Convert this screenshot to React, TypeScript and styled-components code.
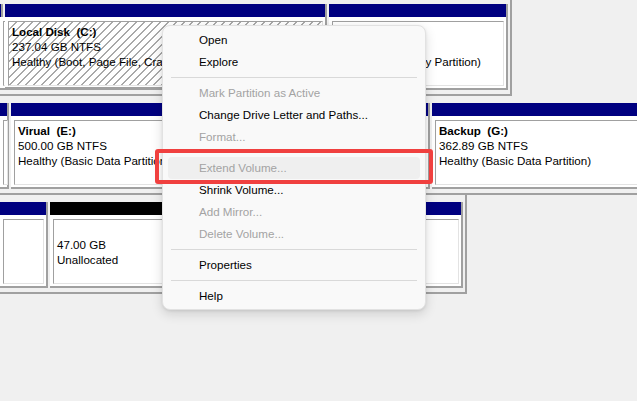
import React from "react";
import styled, { createGlobalStyle } from "styled-components";

const GlobalStyle = createGlobalStyle`
  html, body {
    margin: 0;
    padding: 0;
    background: #f0f0f0;
    overflow: hidden;
  }
  body {
    font-family: "Segoe UI", "Liberation Sans", Arial, sans-serif;
    font-size: 11.6px;
    color: #000;
  }
`;

const Screen = styled.div`
  position: relative;
  width: 637px;
  height: 401px;
  overflow: hidden;
  background: #f0f0f0;
`;

const DiskList = styled.div`
  display: flex;
  flex-direction: column;
  align-items: flex-start;
`;

const DiskRow = styled.div<{ $padTop: number }>`
  display: flex;
  flex: none;
  gap: 2px;
  height: 86px;
  padding: ${(p) => p.$padTop}px 2px 4px 0;
  border-right: 2px solid #a0a0a0;
  border-bottom: 2px solid #a0a0a0;
  background: #f0f0f0;
`;

const Partition = styled.div<{ $w: number }>`
  width: ${(p) => p.$w}px;
  flex: none;
  box-sizing: border-box;
  display: flex;
  flex-direction: column;
  border-right: 2px solid #a0a0a0;
`;

const Header = styled.div<{ $free?: boolean }>`
  height: 13px;
  flex: none;
  background: ${(p) => (p.$free ? "#000000" : "#000080")};
`;

const Body = styled.div<{ $selected?: boolean }>`
  flex: 1;
  min-height: 0;
  display: flex;
  background: #fff;
  padding: 4px 2px ${(p) => (p.$selected ? 1 : 2)}px 3px;
  border-bottom: ${(p) => (p.$selected ? 3 : 2)}px solid #a0a0a0;
`;

const Content = styled.div<{ $hatched?: boolean }>`
  flex: 1;
  min-width: 0;
  overflow: hidden;
  padding: 2px 0 0 3px;
  border-top: 1px solid #a0a0a0;
  border-left: 1px solid #a0a0a0;
  border-right: 1px solid #e3e3e3;
  border-bottom: 1px solid #e3e3e3;
  background: ${(p) =>
    p.$hatched
      ? "repeating-linear-gradient(135deg, #ffffff 0 4.5px, #a9a9a9 4.5px 5.66px)"
      : "#ffffff"};
`;

const Line = styled.div<{ $bold?: boolean }>`
  height: 15px;
  line-height: 15px;
  white-space: pre;
  font-weight: ${(p) => (p.$bold ? 700 : 400)};
`;

/* context menu */

const Menu = styled.div`
  position: absolute;
  left: 162px;
  top: 25px;
  width: 264px;
  box-sizing: border-box;
  padding: 3px 5px 2px;
  background: #f9f9f9;
  border: 1px solid #e2e2e2;
  border-radius: 8px;
  box-shadow: 0 4px 12px rgba(0, 0, 0, 0.14), 0 1px 3px rgba(0, 0, 0, 0.08);
  display: flex;
  flex-direction: column;
`;

const MenuItem = styled.div<{ $disabled?: boolean; $hot?: boolean }>`
  height: 22px;
  line-height: 22px;
  padding-left: 31px;
  border-radius: 4px;
  white-space: nowrap;
  color: ${(p) => (p.$disabled ? "#a3a3a3" : "#000")};
  background: ${(p) => (p.$hot ? "#efefef" : "transparent")};
`;

const Separator = styled.div`
  height: 9px;
  display: flex;
  align-items: center;
  padding: 0 3px;
  &::after {
    content: "";
    flex: 1;
    height: 1px;
    background: #d9d9d9;
  }
`;

const Callout = styled.div`
  position: absolute;
  left: 155px;
  top: 149px;
  width: 278px;
  height: 35px;
  box-sizing: border-box;
  border: 4px solid #f0403f;
  border-radius: 3px;
`;

type Vol = {
  w: number;
  free?: boolean;
  selected?: boolean;
  lines?: { text: string; bold?: boolean }[];
};

const disks: { padTop: number; volumes: Vol[] }[] = [
  {
    padTop: 4,
    volumes: [
      { w: 3 },
      {
        w: 322,
        selected: true,
        lines: [
          { text: "Local Disk  (C:)", bold: true },
          { text: "237.04 GB NTFS" },
          { text: "Healthy (Boot, Page File, Crash Dump, Basic Data Partition)" },
        ],
      },
      {
        w: 179,
        lines: [
          { text: "" },
          { text: "750 MB NTFS" },
          { text: "Healthy (Recovery Partition)" },
        ],
      },
    ],
  },
  {
    padTop: 7,
    volumes: [
      { w: 9 },
      {
        w: 419,
        lines: [
          { text: "Virual  (E:)", bold: true },
          { text: "500.00 GB NTFS" },
          { text: "Healthy (Basic Data Partition)" },
        ],
      },
      {
        w: 260,
        lines: [
          { text: "Backup  (G:)", bold: true },
          { text: "362.89 GB NTFS" },
          { text: "Healthy (Basic Data Partition)" },
        ],
      },
    ],
  },
  {
    padTop: 7,
    volumes: [
      { w: 48 },
      {
        w: 250,
        free: true,
        lines: [{ text: "" }, { text: "47.00 GB" }, { text: "Unallocated" }],
      },
      {
        w: 161,
        lines: [
          { text: "Data  (F:)", bold: true },
          { text: "80.00 GB NTFS" },
          { text: "Healthy" },
        ],
      },
    ],
  },
];

type Entry =
  | { sep: true }
  | { label: string; disabled?: boolean; hot?: boolean };

const menu: Entry[] = [
  { label: "Open" },
  { label: "Explore" },
  { sep: true },
  { label: "Mark Partition as Active", disabled: true },
  { label: "Change Drive Letter and Paths..." },
  { label: "Format...", disabled: true },
  { sep: true },
  { label: "Extend Volume...", disabled: true, hot: true },
  { label: "Shrink Volume..." },
  { label: "Add Mirror...", disabled: true },
  { label: "Delete Volume...", disabled: true },
  { sep: true },
  { label: "Properties" },
  { sep: true },
  { label: "Help" },
];

export default function App() {
  return (
    <>
      <GlobalStyle />
      <Screen>
        <DiskList>
          {disks.map((d, i) => (
            <DiskRow key={i} $padTop={d.padTop}>
              {d.volumes.map((v, j) => (
                <Partition key={j} $w={v.w}>
                  <Header $free={v.free} />
                  <Body $selected={v.selected}>
                    <Content $hatched={v.selected}>
                      {(v.lines ?? []).map((l, k) => (
                        <Line key={k} $bold={l.bold}>
                          {l.text}
                        </Line>
                      ))}
                    </Content>
                  </Body>
                </Partition>
              ))}
            </DiskRow>
          ))}
        </DiskList>

        <Menu>
          {menu.map((m, i) =>
            "sep" in m ? (
              <Separator key={i} />
            ) : (
              <MenuItem key={i} $disabled={m.disabled} $hot={m.hot}>
                {m.label}
              </MenuItem>
            )
          )}
        </Menu>
        <Callout />
      </Screen>
    </>
  );
}
